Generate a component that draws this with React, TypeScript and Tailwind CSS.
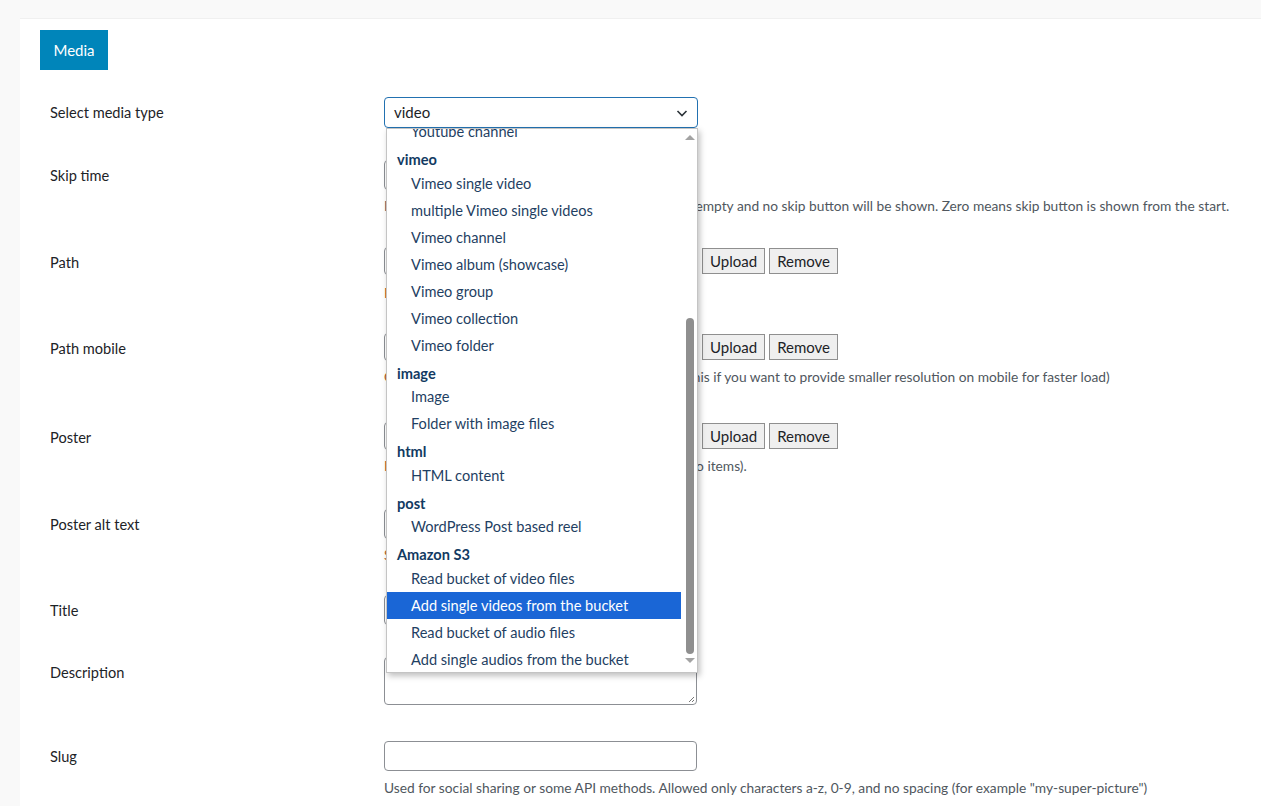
import React from "react";

const FONT = { fontFamily: "Lato, 'Noto Sans', sans-serif" };

type Opt = { label: string; group?: boolean; selected?: boolean };

const options: Opt[] = [
  { label: "Youtube channel" },
  { label: "vimeo", group: true },
  { label: "Vimeo single video" },
  { label: "multiple Vimeo single videos" },
  { label: "Vimeo channel" },
  { label: "Vimeo album (showcase)" },
  { label: "Vimeo group" },
  { label: "Vimeo collection" },
  { label: "Vimeo folder" },
  { label: "image", group: true },
  { label: "Image" },
  { label: "Folder with image files" },
  { label: "html", group: true },
  { label: "HTML content" },
  { label: "post", group: true },
  { label: "WordPress Post based reel" },
  { label: "Amazon S3", group: true },
  { label: "Read bucket of video files" },
  { label: "Add single videos from the bucket", selected: true },
  { label: "Read bucket of audio files" },
  { label: "Add single audios from the bucket" },
];

function Label({ children }: { children: React.ReactNode }) {
  return (
    <div className="w-[364px] shrink-0 pl-[30px] pt-[6px] text-[14.6px] leading-5 text-[#1d2327]">
      {children}
    </div>
  );
}

function TextInput({ h = "h-[30px]" }: { h?: string }) {
  return <div className={`w-[313px] ${h} rounded border border-[#8c8f94] bg-white`} />;
}

function UploadRow() {
  return (
    <div className="flex items-center gap-[4px]">
      <div className="mr-[1px]">
        <TextInput h="h-[28px]" />
      </div>
      <button className="h-[26px] border border-[#8f8f8f] bg-[#efefef] px-[7px] text-[15px] leading-none text-[#1d2327]">
        Upload
      </button>
      <button className="h-[26px] border border-[#8f8f8f] bg-[#efefef] px-[7px] text-[15px] leading-none text-[#1d2327]">
        Remove
      </button>
    </div>
  );
}

function Desc({ children }: { children: React.ReactNode }) {
  return <p className="mt-[8px] text-[13.75px] leading-4 text-[#50575e]">{children}</p>;
}

function Dropdown() {
  return (
    <div className="absolute left-[2px] top-[31px] z-10 h-[545px] w-[312px] overflow-hidden border border-[#c4c4c4] bg-white shadow-[2px_3px_6px_rgba(0,0,0,0.25)]">
      <div className="relative -mt-[10.5px] pr-[16px]">
        {options.map((o) =>
          o.group ? (
            <div
              key={o.label}
              className="flex h-[24.5px] items-center pl-[10px] pt-[4.5px] text-[14.6px] font-bold text-[#123a62]"
            >
              {o.label}
            </div>
          ) : (
            <div
              key={o.label}
              className={`flex h-[27px] items-center pl-[24px] text-[14.6px] ${
                o.selected ? "bg-[#1a66d6] text-white" : "text-[#1f3f63]"
              }`}
            >
              {o.label}
            </div>
          )
        )}
      </div>
      {/* scrollbar */}
      <div className="absolute right-0 top-0 flex h-full w-[14px] flex-col items-center bg-white">
        <div className="mt-[6px] h-0 w-0 border-x-[5px] border-b-[5px] border-x-transparent border-b-[#a3a3a3]" />
        <div className="mt-[178px] h-[336px] w-[8px] rounded-full bg-[#8f8f8f]" />
        <div className="mt-[4px] h-0 w-0 border-x-[5px] border-t-[5px] border-x-transparent border-t-[#a3a3a3]" />
      </div>
    </div>
  );
}

export default function App() {
  return (
    <main className="min-h-screen bg-[#f9f9f9] pl-[20px] pt-[18px]" style={FONT}>
      <div className="min-h-[788px] border-t border-[#f0f0f0] bg-white">
        <div className="pl-[20px] pt-[11px]">
          <button className="h-[40px] w-[68px] bg-[#0085ba] text-[15px] text-white">Media</button>
        </div>

        {/* Select media type */}
        <div className="mt-[27px] flex h-[63px] items-start">
          <Label>Select media type</Label>
          <div className="relative">
            <div className="flex h-[31px] w-[314px] items-center justify-between rounded border border-[#2271b1] bg-white pl-[9px] pr-[8px] text-[15px] text-[#1d2327]">
              <span>video</span>
              <svg width="14" height="14" viewBox="0 0 14 14" fill="none">
                <path d="M2.5 5l4.5 4.5L11.5 5" stroke="#2c3338" strokeWidth="1.6" />
              </svg>
            </div>
            <Dropdown />
          </div>
        </div>

        {/* Skip time */}
        <div className="flex h-[87px] items-start">
          <Label>Skip time</Label>
          <div>
            <TextInput />
            <Desc>
              Delay in seconds for a skip button to show. Leave it empty and no skip button will be shown. Zero means skip button is shown from the start.
            </Desc>
          </div>
        </div>

        {/* Path */}
        <div className="flex h-[86px] items-start">
          <Label>Path</Label>
          <div>
            <UploadRow />
            <p className="mt-[10px] text-[13.75px] leading-4 text-[#b35c1e]">Required field</p>
          </div>
        </div>

        {/* Path mobile */}
        <div className="flex h-[89px] items-start">
          <Label>Path mobile</Label>
          <div>
            <UploadRow />
            <Desc>
              <span className="text-[#b35c1e]">O</span>ptional path used on all mobile devices only (use this if you want to provide smaller resolution on mobile for faster load)
            </Desc>
          </div>
        </div>

        {/* Poster */}
        <div className="flex h-[87px] items-start">
          <Label>Poster</Label>
          <div>
            <UploadRow />
            <Desc>
              <span className="text-[#b35c1e]">I</span>mage shown before the playback (of video and audio items).
            </Desc>
          </div>
        </div>

        {/* Poster alt text */}
        <div className="flex h-[86px] items-start">
          <Label>Poster alt text</Label>
          <div>
            <TextInput />
            <Desc>
              <span className="text-[#b35c1e]">S</span>hort description of the poster image.
            </Desc>
          </div>
        </div>

        {/* Title */}
        <div className="flex h-[62px] items-start">
          <Label>Title</Label>
          <div>
            <TextInput />
          </div>
        </div>

        {/* Description */}
        <div className="flex h-[84px] items-start">
          <Label>Description</Label>
          <div className="relative">
            <div className="h-[48px] w-[313px] rounded border border-[#8c8f94] bg-white" />
            <svg className="absolute bottom-[2px] right-[2px]" width="8" height="8" viewBox="0 0 8 8">
              <path d="M7 2L2 7M7 5L5 7" stroke="#777" strokeWidth="1" />
            </svg>
          </div>
        </div>

        {/* Slug */}
        <div className="flex items-start">
          <Label>Slug</Label>
          <div>
            <TextInput />
            <p className="mt-[9px] text-[13.75px] leading-4 text-[#50575e]">
              Used for social sharing or some API methods. Allowed only characters a-z, 0-9, and no spacing (for example "my-super-picture")
            </p>
          </div>
        </div>
      </div>
    </main>
  );
}
